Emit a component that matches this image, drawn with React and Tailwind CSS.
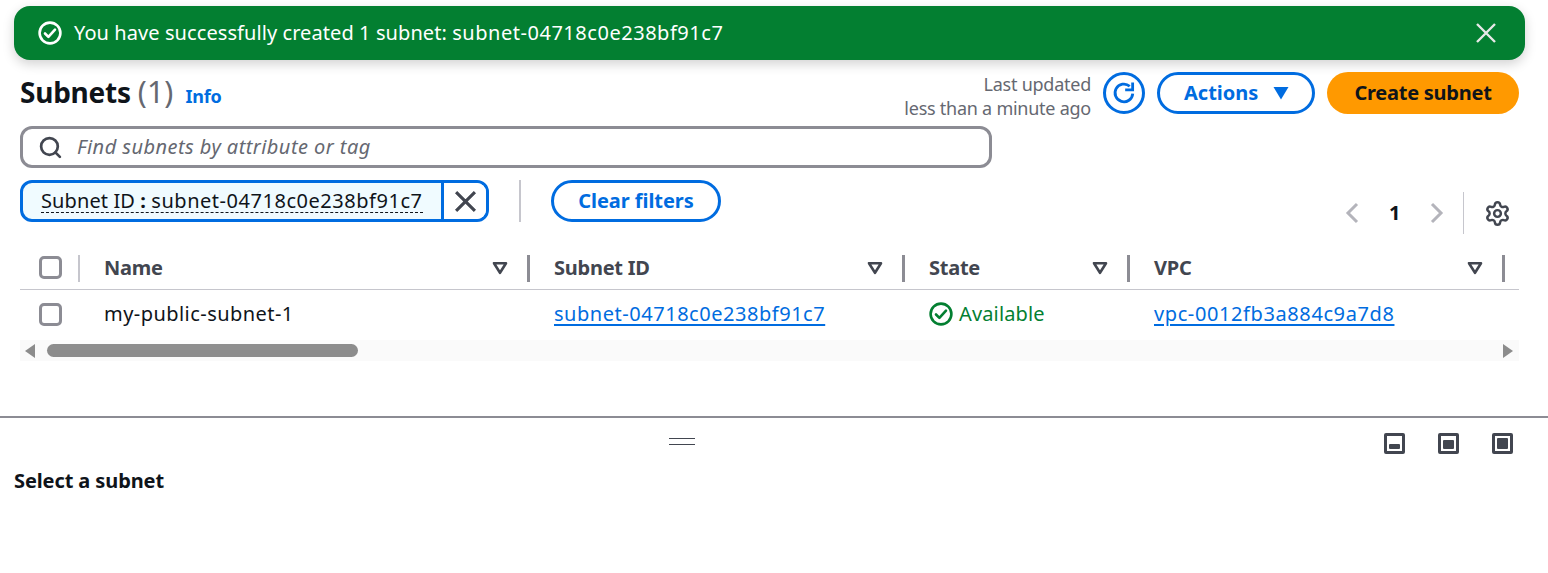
import { Search, Settings } from "lucide-react";

const columns = [
  { label: "Name", width: "w-[450px]" },
  { label: "Subnet ID", width: "w-[375px]" },
  { label: "State", width: "w-[225px]" },
  { label: "VPC", width: "w-[375px]" },
];

function CheckCircle({ className }) {
  return (
    <svg viewBox="0 0 24 24" fill="none" stroke="currentColor" strokeWidth="2.6" className={className}>
      <circle cx="12" cy="12" r="10.4" />
      <path d="M7 12.5l3.4 3.4L17 8.6" strokeLinecap="round" strokeLinejoin="round" />
    </svg>
  );
}

function CloseIcon({ className, weight }) {
  return (
    <svg viewBox="0 0 22 22" fill="none" stroke="currentColor" strokeWidth={weight} className={className}>
      <path d="M2 2l18 18M20 2L2 20" />
    </svg>
  );
}

function Chevron({ points }) {
  return (
    <svg viewBox="0 0 14 22" className="w-[14px] h-[22px] text-[#b4b4bb]" fill="none" stroke="currentColor" strokeWidth="3">
      <path d={points} />
    </svg>
  );
}

function Checkbox() {
  return <div className="w-[23px] h-[23px] rounded-[5px] border-[3px] border-[#8c8c94] bg-white"></div>;
}

function SortIcon() {
  return (
    <svg viewBox="0 0 16 14" className="w-4 h-[14px]" fill="none" stroke="#424650" strokeWidth="2.6" strokeLinejoin="round">
      <path d="M2 2.2h12L8 11.8z" />
    </svg>
  );
}

function PanelIcon({ fill }) {
  return (
    <div className="w-[21px] h-[21px] border-[3px] border-[#424650] rounded-[2px] flex items-end p-[2px]">
      <div className={`w-full bg-[#424650] rounded-[1px] ${fill}`}></div>
    </div>
  );
}

function HeaderCell({ label, width }) {
  return (
    <div className={`${width} h-full flex items-center justify-between pl-[24px] pr-[22px] relative`}>
      <span className="font-bold text-[#424650] text-[20px]">{label}</span>
      <SortIcon />
      <div className="absolute right-0 top-[9px] bottom-[7px] w-[3px] bg-[#8c8c94]"></div>
    </div>
  );
}

export default function App() {
  return (
    <div className="w-[1548px] h-[573px] bg-white overflow-hidden font-['Noto_Sans',sans-serif] text-[#0f141a] text-[20px] tracking-[-0.25px] pt-[6px]">
      {/* flash banner */}
      <div className="mx-[14px] w-[1511px] h-[54px] rounded-[16px] bg-[#037f31] text-white flex items-center pl-[24px] pr-[28px] shadow-[0_4px_12px_rgba(0,0,0,0.18)]">
        <CheckCircle className="w-6 h-6 mr-[12px]" />
        <span className="flex-1 tracking-[0.08px] whitespace-nowrap">
          You have successfully created 1 subnet: <span className="tracking-[0.53px]">subnet-04718c0e238bf91c7</span>
        </span>
        <CloseIcon className="w-[22px] h-[22px] text-[#e8e8e8]" weight="2.4" />
      </div>

      {/* header */}
      <div className="flex items-center mt-[12px] pl-[20px] pr-[29px] h-[42px]">
        <h1 className="text-[28px] font-bold leading-[40px] mt-[-3px]">Subnets</h1>
        <span className="text-[30px] leading-[40px] text-[#656871] ml-[7px] mt-[-2px] tracking-[0.2px]">(1)</span>
        <span className="text-[#006ce0] font-bold text-[18px] ml-[12px] mt-[6px]">Info</span>
        <div className="ml-auto text-right text-[#656871] text-[18px] leading-[24px] mt-[6px]">
          <div>Last updated</div>
          <div>less than a minute ago</div>
        </div>
        <div className="ml-[12px] w-[42px] h-[42px] rounded-full border-[3px] border-[#006ce0] text-[#006ce0] flex items-center justify-center">
          <svg viewBox="0 0 24 24" className="w-[28px] h-[28px]" fill="none" stroke="currentColor" strokeWidth="2.4">
            <path d="M19.5 12.5a7.6 7.6 0 1 1-2.6-6.3" />
            <path d="M13 9.4h6.4V3" />
          </svg>
        </div>
        <div className="ml-[12px] w-[158px] h-[42px] rounded-full border-[3px] border-[#006ce0] text-[#006ce0] font-bold flex items-center pl-[24px] tracking-[0px]">
          Actions
          <svg viewBox="0 0 16 14" className="w-4 h-[14px] ml-[15px]" fill="currentColor">
            <path d="M0.5 1h15L8 13.5z" />
          </svg>
        </div>
        <div className="ml-[12px] w-[192px] h-[42px] rounded-full bg-[#ff9900] font-bold flex items-center justify-center">Create subnet</div>
      </div>

      {/* search */}
      <div className="ml-[20px] mt-[12px] w-[972px] h-[42px] rounded-[12px] border-[3px] border-[#8c8c94] flex items-center pl-[15px]">
        <Search size={25} strokeWidth={2.6} className="text-[#424650]" />
        <span className="italic text-[#656871] ml-[14px] tracking-[0.45px]">Find subnets by attribute or tag</span>
      </div>

      {/* token row */}
      <div className="flex items-start mt-[12px] pl-[20px] pr-[38px] h-[66px]">
        <div className="w-[469px] h-[42px] rounded-[12px] border-[3px] border-[#006ce0] bg-[#f0fbff] flex overflow-hidden">
          <div className="flex-1 flex items-center pl-[18px] border-r-[3px] border-[#006ce0]">
            <span className="border-b border-dashed border-[#0f141a] text-[20px] leading-[23px] whitespace-nowrap tracking-[0.1px]">
              Subnet ID <b>:</b> <span className="tracking-[0.53px]">subnet-04718c0e238bf91c7</span>
            </span>
          </div>
          <div className="w-[42px] flex items-center justify-center bg-white text-[#424650]">
            <CloseIcon className="w-[23px] h-[23px]" weight="3" />
          </div>
        </div>
        <div className="ml-[30px] w-[2px] h-[42px] bg-[#c6c6cd]"></div>
        <div className="ml-[30px] w-[170px] h-[42px] rounded-full border-[3px] border-[#006ce0] text-[#006ce0] font-bold flex items-center justify-center tracking-[-0.05px]">
          Clear filters
        </div>
        <div className="ml-auto flex items-center h-[42px] mt-[12px]">
          <Chevron points="M12 2L3 11l9 9" />
          <span className="font-bold w-[71px] text-center text-[20px]">1</span>
          <Chevron points="M2 2l9 9-9 9" />
          <div className="ml-[19px] w-px h-[42px] bg-[#c6c6cd]"></div>
          <Settings size={27} strokeWidth={2.2} className="text-[#424650] ml-[20px] mr-[-1px]" />
        </div>
      </div>

      {/* table */}
      <div className="ml-[20px] w-[1499px]">
        <div className="flex h-[44px] border-b border-[#c6c6cd]">
          <div className="w-[60px] h-full flex items-center pl-[19px] pb-[1px] relative">
            <Checkbox />
            <div className="absolute right-0 top-[9px] bottom-[7px] w-[2px] bg-[#c6c6cd]"></div>
          </div>
          {columns.map((col) => (
            <HeaderCell key={col.label} label={col.label} width={col.width} />
          ))}
        </div>
        <div className="flex h-[49px] items-center pb-[1px]">
          <div className="w-[60px] pl-[19px]">
            <Checkbox />
          </div>
          <div className="w-[450px] pl-[24px] tracking-[0.45px]">my-public-subnet-1</div>
          <div className="w-[375px] pl-[24px]">
            <span className="text-[#006ce0] underline decoration-2 underline-offset-[3px] tracking-[0.53px]">subnet-04718c0e238bf91c7</span>
          </div>
          <div className="w-[225px] pl-[24px] flex items-center text-[#037f31] tracking-[0.15px]">
            <CheckCircle className="w-6 h-6 mr-[6px]" />
            Available
          </div>
          <div className="w-[375px] pl-[24px]">
            <span className="text-[#006ce0] underline decoration-2 underline-offset-[3px] tracking-[0.6px]">vpc-0012fb3a884c9a7d8</span>
          </div>
        </div>
        {/* scrollbar */}
        <div className="h-[21px] bg-[#fafafa] mt-[1px] flex items-center pl-[5px] pr-[6px]">
          <svg viewBox="0 0 10 14" className="w-[10px] h-[14px]" fill="#8c8c8c">
            <path d="M10 0v14L0 7z" />
          </svg>
          <div className="ml-[12px] w-[311px] h-[13px] rounded-full bg-[#8c8c8c]"></div>
          <svg viewBox="0 0 10 14" className="ml-auto w-[10px] h-[14px]" fill="#8c8c8c">
            <path d="M0 0v14L10 7z" />
          </svg>
        </div>
      </div>

      {/* split panel */}
      <div className="mt-[55px] border-t-2 border-[#8c8c94] relative pt-[51px] pl-[14px]">
        <div className="absolute left-[669px] top-[20px] w-[26px] h-[7px] border-y border-[#424650]"></div>
        <div className="absolute right-[35px] top-[15px] flex gap-[33px]">
          <PanelIcon fill="h-[5px]" />
          <PanelIcon fill="h-[9px]" />
          <PanelIcon fill="h-[11px]" />
        </div>
        <div className="font-bold text-[20px] leading-[24px] tracking-[-0.1px]">Select a subnet</div>
      </div>
    </div>
  );
}
